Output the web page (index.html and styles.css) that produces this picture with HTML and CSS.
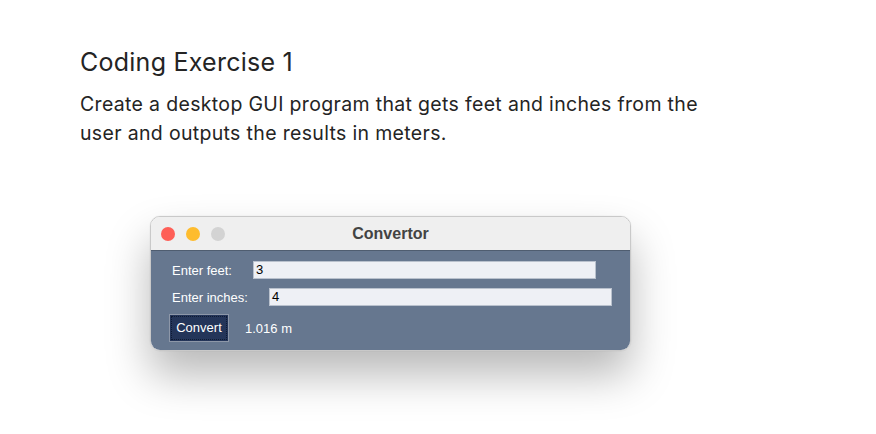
FILE: index.html
```html
<!DOCTYPE html>
<html>
<head>
<meta charset="utf-8">
<link rel="stylesheet" href="styles.css">
</head>
<body>
<main class="page">
  <h1 class="title">Coding Exercise 1</h1>
  <p class="desc">Create a desktop GUI program that gets feet and inches from the<br>user and outputs the results in meters.</p>
  <div class="stage">
    <div class="window">
      <div class="titlebar">
        <div class="lights">
          <span class="light red"></span>
          <span class="light yellow"></span>
          <span class="light gray"></span>
        </div>
        <div class="wtitle">Convertor</div>
      </div>
      <div class="wbody">
        <div class="row">
          <label class="lbl">Enter feet:</label>
          <div class="field">3</div>
        </div>
        <div class="row">
          <label class="lbl">Enter inches:</label>
          <div class="field">4</div>
        </div>
        <div class="row actions">
          <div class="btn">Convert</div>
          <span class="result">1.016 m</span>
        </div>
      </div>
    </div>
  </div>
</main>
</body>
</html>
```

FILE: styles.css
```css
* { box-sizing: border-box; }
html, body { margin: 0; padding: 0; background: #ffffff; }
body { width: 876px; height: 434px; overflow: hidden; }

.page {
  padding: 46px 0 0 80px;
  font-family: Inter, "Noto Sans", sans-serif;
  color: #242424;
}

.title {
  margin: 0;
  font-size: 25px;
  font-weight: 400;
  line-height: 32px;
  letter-spacing: 0.25px;
}

.desc {
  margin: 12px 0 0 0;
  font-size: 19.5px;
  line-height: 29px;
  font-weight: 400;
  letter-spacing: 0.33px;
  white-space: nowrap;
}

.stage {
  padding: 68px 0 0 70px;
}

.window {
  width: 481px;
  height: 135px;
  border-radius: 10px;
  overflow: hidden;
  border: 1px solid #c9c9c9;
  box-shadow: 0 24px 44px rgba(0,0,0,0.28), 0 0 1px rgba(0,0,0,0.2);
  font-family: "Liberation Sans", Arial, sans-serif;
}

.titlebar {
  height: 34px;
  background: #efefef;
  display: flex;
  align-items: center;
  position: relative;
  border-bottom: 1px solid #4f5d70;
}

.lights {
  display: flex;
  gap: 11px;
  padding-left: 10px;
}

.light {
  width: 14px;
  height: 14px;
  border-radius: 50%;
  display: block;
}
.red { background: #fe5f57; }
.yellow { background: #febc2e; }
.gray { background: #d3d3d3; }

.wtitle {
  position: absolute;
  left: 0;
  right: 0;
  text-align: center;
  font-weight: 700;
  font-size: 16px;
  color: #434343;
}

.wbody {
  background: #66778f;
  height: 99px;
  padding: 10px 0 0 18px;
  display: flex;
  flex-direction: column;
  gap: 9px;
}

.row {
  display: flex;
  align-items: center;
  height: 18px;
}

.lbl {
  margin-left: 3px;
  margin-right: 21px;
  color: #ffffff;
  font-size: 13px;
}

.field {
  width: 343px;
  height: 18px;
  background: #eef0f5;
  border: 1px solid #b9c1cd;
  color: #000000;
  font-size: 13px;
  line-height: 16px;
  padding-left: 2px;
}

.actions {
  height: 28px;
  margin-top: -1px;
}

.btn {
  width: 60px;
  height: 28px;
  background: #243559;
  border: 1px solid #8d97a8;
  outline: 1px dotted #0e1a33;
  outline-offset: -3px;
  color: #ffffff;
  font-size: 13px;
  display: flex;
  align-items: center;
  justify-content: center;
  padding-bottom: 2px;
}

.result {
  margin-left: 16px;
  color: #ffffff;
  font-size: 13px;
}
```
